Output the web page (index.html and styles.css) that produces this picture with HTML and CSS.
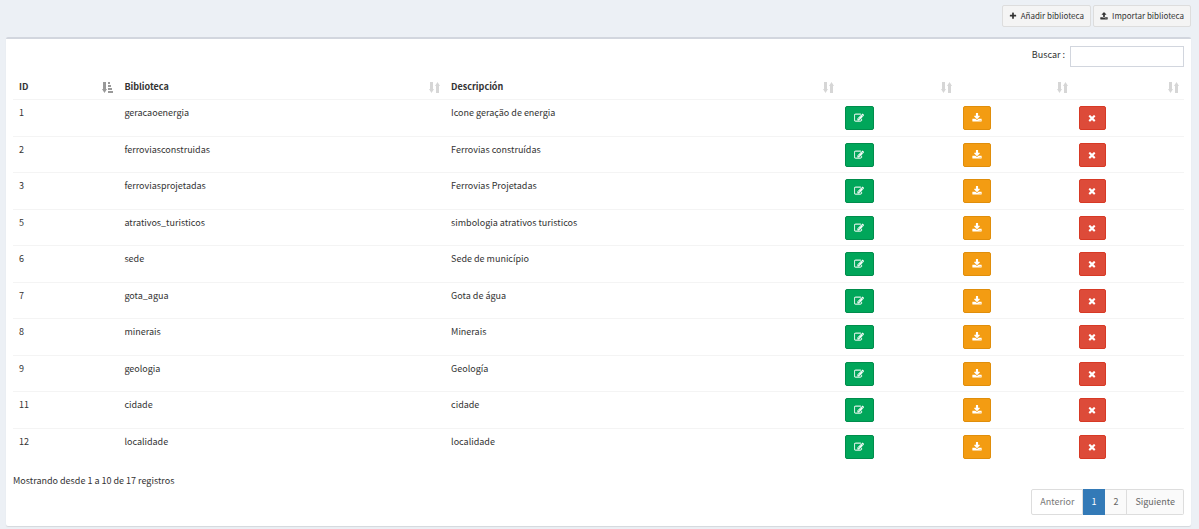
FILE: index.html
```html
<!DOCTYPE html>
<html lang="es">
<head>
<meta charset="utf-8">
<title>Bibliotecas</title>
<link rel="stylesheet" href="styles.css">
</head>
<body>
<svg class="sprite" aria-hidden="true">
<symbol id="plus" viewBox="0 0 1792 1792"><path d="M1600 736v192q0 40-28 68t-68 28h-416v416q0 40-28 68t-68 28h-192q-40 0-68-28t-28-68v-416h-416q-40 0-68-28t-28-68v-192q0-40 28-68t68-28h416v-416q0-40 28-68t68-28h192q40 0 68 28t28 68v416h416q40 0 68 28t28 68z"/></symbol>
<symbol id="upload" viewBox="0 0 1792 1792"><path d="M1344 1472q0-26-19-45t-45-19-45 19-19 45 19 45 45 19 45-19 19-45zm256 0q0-26-19-45t-45-19-45 19-19 45 19 45 45 19 45-19 19-45zm128-224v320q0 40-28 68t-68 28h-1472q-40 0-68-28t-28-68v-320q0-40 28-68t68-28h427q21 56 70.5 92t110.500 36h256q61 0 110.500-36t70.500-92h427q40 0 68 28t28 68zm-325-648q-17 40-59 40h-256v448q0 26-19 45t-45 19h-256q-26 0-45-19t-19-45v-448h-256q-42 0-59-40-17-39 14-69l448-448q18-19 45-19t45 19l448 448q31 30 14 69z"/></symbol>
<symbol id="download" viewBox="0 0 1792 1792"><path d="M1344 1344q0-26-19-45t-45-19-45 19-19 45 19 45 45 19 45-19 19-45zm256 0q0-26-19-45t-45-19-45 19-19 45 19 45 45 19 45-19 19-45zm128-224v320q0 40-28 68t-68 28h-1472q-40 0-68-28t-28-68v-320q0-40 28-68t68-28h465l135 136q58 56 136 56t136-56l136-136h464q40 0 68 28t28 68zm-325-569q17 41-14 70l-448 448q-18 19-45 19t-45-19l-448-448q-31-29-14-70 17-39 59-39h256v-448q0-26 19-45t45-19h256q26 0 45 19t19 45v448h256q42 0 59 39z"/></symbol>
<symbol id="times" viewBox="0 0 1792 1792"><path d="M1490 1322q0 40-28 68l-136 136q-28 28-68 28t-68-28l-294-294-294 294q-28 28-68 28t-68-28l-136-136q-28-28-28-68t28-68l294-294-294-294q-28-28-28-68t28-68l136-136q28-28 68-28t68 28l294 294 294-294q28-28 68-28t68 28l136 136q28 28 28 68t-28 68l-294 294 294 294q28 28 28 68z"/></symbol>
<symbol id="edit" viewBox="0 0 1792 1792"><path d="M888 1184l116-116-152-152-116 116v56h96v96h56zm440-720q-16-16-33 1l-350 350q-17 17-1 33t33-1l350-350q17-17 1-33zm80 594v190q0 119-84.500 203.500t-203.500 84.500h-832q-119 0-203.500-84.500t-84.500-203.500v-832q0-119 84.500-203.500t203.500-84.500h832q63 0 117 25 15 7 18 23 3 17-9 29l-49 49q-14 14-32 8-23-6-45-6h-832q-66 0-113 47t-47 113v832q0 66 47 113t113 47h832q66 0 113-47t47-113v-126q0-13 9-22l64-64q15-15 35-7t20 29zm-96-738l288 288-672 672h-288v-288zm444 132l-92 92-288-288 92-92q28-28 68-28t68 28l152 152q28 28 28 68t-28 68z"/></symbol>
<symbol id="sort" viewBox="0 0 11 11"><path d="M1 0h3v7h1L2.500 11 0 7h1zM7 11h3V4h1L8.500 0 6 4h1z"/></symbol>
<symbol id="sort-asc" viewBox="0 0 11 11"><path d="M1 0h3v7h1L2.500 11 0 7h1zM6 0h2v2H6zM6 3h3v2H6zM6 6h4v2H6zM6 9h5v2H6z"/></symbol>
</svg>

<header class="toolbar">
<button class="tool" type="button"><svg class="tool-icon"><use href="#plus"/></svg>Añadir biblioteca</button>
<button class="tool" type="button"><svg class="tool-icon"><use href="#upload"/></svg>Importar biblioteca</button>
</header>

<main class="box">
<div class="filter">
<label for="search">Buscar&nbsp;:</label>
<input class="search" id="search" type="search">
</div>

<table class="grid">
<colgroup><col class="c-id"><col class="c-name"><col class="c-desc"><col class="c-edit"><col class="c-down"><col></colgroup>
<thead>
<tr>
<th><div class="head">ID<svg class="sort active"><use href="#sort-asc"/></svg></div></th>
<th><div class="head">Biblioteca<svg class="sort"><use href="#sort"/></svg></div></th>
<th><div class="head">Descripción<svg class="sort"><use href="#sort"/></svg></div></th>
<th><div class="head"><svg class="sort"><use href="#sort"/></svg></div></th>
<th><div class="head"><svg class="sort"><use href="#sort"/></svg></div></th>
<th><div class="head"><svg class="sort"><use href="#sort"/></svg></div></th>
</tr>
</thead>
<tbody>
<tr><td>1</td><td>geracaoenergia</td><td>Icone geração de energia</td><td><button class="act edit" type="button" aria-label="Editar"><svg><use href="#edit"/></svg></button></td><td><button class="act down" type="button" aria-label="Descargar"><svg><use href="#download"/></svg></button></td><td><button class="act del" type="button" aria-label="Eliminar"><svg><use href="#times"/></svg></button></td></tr>
<tr><td>2</td><td>ferroviasconstruidas</td><td>Ferrovias construídas</td><td><button class="act edit" type="button" aria-label="Editar"><svg><use href="#edit"/></svg></button></td><td><button class="act down" type="button" aria-label="Descargar"><svg><use href="#download"/></svg></button></td><td><button class="act del" type="button" aria-label="Eliminar"><svg><use href="#times"/></svg></button></td></tr>
<tr><td>3</td><td>ferroviasprojetadas</td><td>Ferrovias Projetadas</td><td><button class="act edit" type="button" aria-label="Editar"><svg><use href="#edit"/></svg></button></td><td><button class="act down" type="button" aria-label="Descargar"><svg><use href="#download"/></svg></button></td><td><button class="act del" type="button" aria-label="Eliminar"><svg><use href="#times"/></svg></button></td></tr>
<tr><td>5</td><td>atrativos_turisticos</td><td>simbologia atrativos turisticos</td><td><button class="act edit" type="button" aria-label="Editar"><svg><use href="#edit"/></svg></button></td><td><button class="act down" type="button" aria-label="Descargar"><svg><use href="#download"/></svg></button></td><td><button class="act del" type="button" aria-label="Eliminar"><svg><use href="#times"/></svg></button></td></tr>
<tr><td>6</td><td>sede</td><td>Sede de município</td><td><button class="act edit" type="button" aria-label="Editar"><svg><use href="#edit"/></svg></button></td><td><button class="act down" type="button" aria-label="Descargar"><svg><use href="#download"/></svg></button></td><td><button class="act del" type="button" aria-label="Eliminar"><svg><use href="#times"/></svg></button></td></tr>
<tr><td>7</td><td>gota_agua</td><td>Gota de água</td><td><button class="act edit" type="button" aria-label="Editar"><svg><use href="#edit"/></svg></button></td><td><button class="act down" type="button" aria-label="Descargar"><svg><use href="#download"/></svg></button></td><td><button class="act del" type="button" aria-label="Eliminar"><svg><use href="#times"/></svg></button></td></tr>
<tr><td>8</td><td>minerais</td><td>Minerais</td><td><button class="act edit" type="button" aria-label="Editar"><svg><use href="#edit"/></svg></button></td><td><button class="act down" type="button" aria-label="Descargar"><svg><use href="#download"/></svg></button></td><td><button class="act del" type="button" aria-label="Eliminar"><svg><use href="#times"/></svg></button></td></tr>
<tr><td>9</td><td>geologia</td><td>Geología</td><td><button class="act edit" type="button" aria-label="Editar"><svg><use href="#edit"/></svg></button></td><td><button class="act down" type="button" aria-label="Descargar"><svg><use href="#download"/></svg></button></td><td><button class="act del" type="button" aria-label="Eliminar"><svg><use href="#times"/></svg></button></td></tr>
<tr><td>11</td><td>cidade</td><td>cidade</td><td><button class="act edit" type="button" aria-label="Editar"><svg><use href="#edit"/></svg></button></td><td><button class="act down" type="button" aria-label="Descargar"><svg><use href="#download"/></svg></button></td><td><button class="act del" type="button" aria-label="Eliminar"><svg><use href="#times"/></svg></button></td></tr>
<tr><td>12</td><td>localidade</td><td>localidade</td><td><button class="act edit" type="button" aria-label="Editar"><svg><use href="#edit"/></svg></button></td><td><button class="act down" type="button" aria-label="Descargar"><svg><use href="#download"/></svg></button></td><td><button class="act del" type="button" aria-label="Eliminar"><svg><use href="#times"/></svg></button></td></tr>
</tbody>
</table>

<p class="info">Mostrando desde 1 a 10 de 17 registros</p>
<nav class="pages" aria-label="Paginación">
<a class="page off" href="#">Anterior</a><a class="page current" href="#" aria-current="page">1</a><a class="page" href="#">2</a><a class="page" href="#">Siguiente</a>
</nav>
</main>
</body>
</html>
```

FILE: styles.css
```css
* {
  box-sizing: border-box;
}

body {
  margin: 0;
  padding: 5px 8px 3px 6px;
  background: #ecf0f5;
  color: #333;
  font: 9px/14px "Noto Sans CJK SC", "Noto Sans", sans-serif;
}

button,
input {
  font: inherit;
  color: inherit;
}

svg {
  fill: currentColor;
}

.sprite {
  display: none;
}

.toolbar {
  display: flex;
  justify-content: flex-end;
  gap: 2px;
  margin-bottom: 10px;
}

.tool {
  display: flex;
  align-items: center;
  gap: 4px;
  padding: 3px 6px;
  border: 1px solid #ddd;
  border-radius: 2px;
  background: #f4f4f4;
  color: #333;
  font-size: 8px;
  line-height: 14px;
}

.tool-icon {
  width: 8px;
  height: 8px;
}

.box {
  padding: 7px 7px 11px;
  border-top: 2px solid #d2d6de;
  border-radius: 2px;
  background: #fff;
  box-shadow: 0 1px 1px rgba(0, 0, 0, 0.1);
}

.filter {
  display: flex;
  justify-content: flex-end;
  gap: 5px;
  line-height: 18px;
  margin-bottom: 9px;
}

.search {
  width: 114px;
  height: 21px;
  padding: 3px 6px;
  border: 1px solid #d2d6de;
  border-radius: 0;
  background: #fff;
}

.grid {
  width: 100%;
  table-layout: fixed;
  border-collapse: collapse;
}

.c-id { width: 9%; }
.c-name { width: 27.9%; }
.c-desc { width: 33.6%; }
.c-edit { width: 10.1%; }
.c-down { width: 9.9%; }

.grid th {
  padding: 4px 5px 5px 6px;
  text-align: left;
  font-weight: 700;
}

.head {
  display: flex;
  align-items: center;
  height: 14px;
}

.sort {
  width: 11px;
  height: 11px;
  margin-left: auto;
  color: #d6d6d6;
}

.sort.active {
  color: #999;
}

.grid td {
  height: 36px;
  padding: 6px 5px 5px 6px;
  border-top: 1px solid #f4f4f4;
  vertical-align: top;
}

.grid tr:nth-child(odd) td {
  height: 37px;
}

.act {
  display: flex;
  align-items: center;
  justify-content: center;
  width: 28px;
  height: 24px;
  padding: 0;
  border: 1px solid;
  border-radius: 2px;
}

.act svg {
  width: 10px;
  height: 10px;
  color: #fff;
}

.edit {
  width: 29px;
  background: #00a65a;
  border-color: #008d4c;
}

.edit svg {
  stroke: #fff;
  stroke-width: 50;
}

.down {
  background: #f39c12;
  border-color: #e08e0b;
}

.del {
  width: 27px;
  background: #dd4b39;
  border-color: #d73925;
}

.info {
  margin: 9px 0 1px;
}

.pages {
  display: flex;
  justify-content: flex-end;
}

.page {
  padding: 5px 8px;
  border: 1px solid #ddd;
  border-left-width: 0;
  background: #fafafa;
  color: #666;
  text-decoration: none;
}

.page:first-child {
  border-left-width: 1px;
  border-radius: 2px 0 0 2px;
}

.page:last-child {
  border-radius: 0 2px 2px 0;
}

.page.off {
  background: #fff;
  color: #777;
}

.page.current {
  background: #337ab7;
  border-color: #337ab7;
  color: #fff;
}
```
